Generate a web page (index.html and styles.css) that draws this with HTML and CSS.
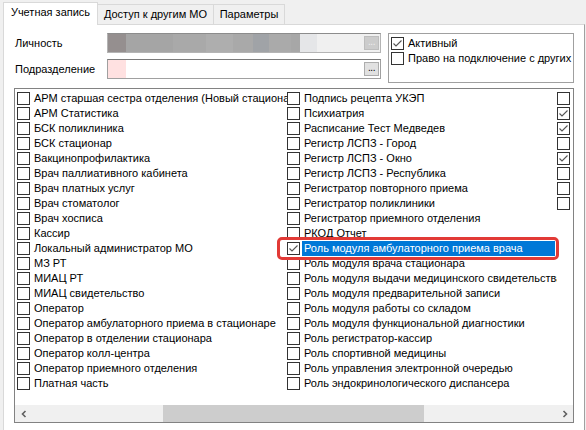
FILE: index.html
```html
<!DOCTYPE html>
<html>
<head>
<meta charset="utf-8">
<link rel="stylesheet" href="styles.css">
</head>
<body>
<div class="tabs">
  <div class="tab tab1 active">Учетная запись</div>
  <div class="tab tab2">Доступ к другим МО</div>
  <div class="tab tab3">Параметры</div>
</div>
<div class="panel">
  <div class="top">
    <div class="form">
      <div class="frow">
        <span class="lbl">Личность</span>
        <div class="field disabled">
          <span class="blk b1"></span><span class="blk b2"></span><span class="blk b3"></span><span class="blk b4"></span><span class="blk b5"></span><span class="blk b6"></span><span class="blk b7"></span><span class="blk b8"></span><span class="blk b9"></span>
          <span class="ebtn off">...</span>
        </div>
      </div>
      <div class="frow">
        <span class="lbl">Подразделение</span>
        <div class="field">
          <span class="blk pink"></span>
          <span class="ebtn">...</span>
        </div>
      </div>
    </div>
    <div class="group">
      <div class="row"><span class="cb"><svg viewBox="0 0 11 11"><polyline points="1.5,5.5 4,8 9.5,2.5"/></svg></span><span class="txt gtxt">Активный</span></div>
      <div class="row"><span class="cb"></span><span class="txt gtxt">Право на подключение с других</span></div>
    </div>
  </div>
  <div class="list">
    <div class="items">
      <div class="col">
        <div class="row"><span class="cb"></span><span class="txt">АРМ старшая сестра отделения (Новый стационар)</span></div>
        <div class="row"><span class="cb"></span><span class="txt">АРМ Статистика</span></div>
        <div class="row"><span class="cb"></span><span class="txt">БСК поликлиника</span></div>
        <div class="row"><span class="cb"></span><span class="txt">БСК стационар</span></div>
        <div class="row"><span class="cb"></span><span class="txt">Вакцинопрофилактика</span></div>
        <div class="row"><span class="cb"></span><span class="txt">Врач паллиативного кабинета</span></div>
        <div class="row"><span class="cb"></span><span class="txt">Врач платных услуг</span></div>
        <div class="row"><span class="cb"></span><span class="txt">Врач стоматолог</span></div>
        <div class="row"><span class="cb"></span><span class="txt">Врач хосписа</span></div>
        <div class="row"><span class="cb"></span><span class="txt">Кассир</span></div>
        <div class="row"><span class="cb"></span><span class="txt">Локальный администратор МО</span></div>
        <div class="row"><span class="cb"></span><span class="txt">МЗ РТ</span></div>
        <div class="row"><span class="cb"></span><span class="txt">МИАЦ РТ</span></div>
        <div class="row"><span class="cb"></span><span class="txt">МИАЦ свидетельство</span></div>
        <div class="row"><span class="cb"></span><span class="txt">Оператор</span></div>
        <div class="row"><span class="cb"></span><span class="txt">Оператор амбулаторного приема в стационаре</span></div>
        <div class="row"><span class="cb"></span><span class="txt">Оператор в отделении стационара</span></div>
        <div class="row"><span class="cb"></span><span class="txt">Оператор колл-центра</span></div>
        <div class="row"><span class="cb"></span><span class="txt">Оператор приемного отделения</span></div>
        <div class="row"><span class="cb"></span><span class="txt">Платная часть</span></div>
      </div>
      <div class="col">
        <div class="row"><span class="cb"></span><span class="txt">Подпись рецепта УКЭП</span></div>
        <div class="row"><span class="cb"></span><span class="txt">Психиатрия</span></div>
        <div class="row"><span class="cb"></span><span class="txt">Расписание Тест Медведев</span></div>
        <div class="row"><span class="cb"></span><span class="txt">Регистр ЛСПЗ - Город</span></div>
        <div class="row"><span class="cb"></span><span class="txt">Регистр ЛСПЗ - Окно</span></div>
        <div class="row"><span class="cb"></span><span class="txt">Регистр ЛСПЗ - Республика</span></div>
        <div class="row"><span class="cb"></span><span class="txt">Регистратор повторного приема</span></div>
        <div class="row"><span class="cb"></span><span class="txt">Регистратор поликлиники</span></div>
        <div class="row"><span class="cb"></span><span class="txt">Регистратор приемного отделения</span></div>
        <div class="row"><span class="cb"></span><span class="txt">РКОД Отчет</span></div>
        <div class="row sel"><span class="cb"><svg viewBox="0 0 11 11"><polyline points="1.5,5.5 4,8 9.5,2.5"/></svg></span><span class="txt">Роль модуля амбулаторного приема врача</span><span class="mark"></span></div>
        <div class="row"><span class="cb"></span><span class="txt">Роль модуля врача стационара</span></div>
        <div class="row"><span class="cb"></span><span class="txt">Роль модуля выдачи медицинского свидетельства</span></div>
        <div class="row"><span class="cb"></span><span class="txt">Роль модуля предварительной записи</span></div>
        <div class="row"><span class="cb"></span><span class="txt">Роль модуля работы со складом</span></div>
        <div class="row"><span class="cb"></span><span class="txt">Роль модуля функциональной диагностики</span></div>
        <div class="row"><span class="cb"></span><span class="txt">Роль регистратор-кассир</span></div>
        <div class="row"><span class="cb"></span><span class="txt">Роль спортивной медицины</span></div>
        <div class="row"><span class="cb"></span><span class="txt">Роль управления электронной очередью</span></div>
        <div class="row"><span class="cb"></span><span class="txt">Роль эндокринологического диспансера</span></div>
      </div>
      <div class="col col3">
        <div class="row"><span class="cb"></span></div>
        <div class="row"><span class="cb"><svg viewBox="0 0 11 11"><polyline points="1.5,5.5 4,8 9.5,2.5"/></svg></span></div>
        <div class="row"><span class="cb"><svg viewBox="0 0 11 11"><polyline points="1.5,5.5 4,8 9.5,2.5"/></svg></span></div>
        <div class="row"><span class="cb"></span></div>
        <div class="row"><span class="cb"><svg viewBox="0 0 11 11"><polyline points="1.5,5.5 4,8 9.5,2.5"/></svg></span></div>
        <div class="row"><span class="cb"></span></div>
        <div class="row"><span class="cb"></span></div>
        <div class="row"><span class="cb"></span></div>
      </div>
    </div>
    <div class="hscroll">
      <span class="sarrow"><svg viewBox="0 0 8 8"><polyline points="5.5,1 2.5,4 5.5,7"/></svg></span>
      <span class="track-before"></span>
      <span class="thumb"></span>
      <span class="track-after"></span>
      <span class="sarrow"><svg viewBox="0 0 8 8"><polyline points="2.5,1 5.5,4 2.5,7"/></svg></span>
    </div>
  </div>
</div>
</body>
</html>
```
FILE: styles.css
```css
* { box-sizing: border-box; }
html, body {
  margin: 0;
  padding: 0;
  background: #f0f0f0;
  font-family: "Liberation Sans", Arial, sans-serif;
  font-size: 11px;
  color: #000;
  overflow: hidden;
}
.tabs {
  display: flex;
  align-items: flex-end;
  height: 24px;
  padding-left: 3px;
}
.tab {
  height: 20px;
  line-height: 18px;
  border: 1px solid #d9d9d9;
  border-bottom: none;
  background: #f0f0f0;
  text-align: center;
  white-space: nowrap;
  margin-left: -1px;
}
.tab1 { width: 95px; margin-left: 0; }
.tab2 { width: 117px; }
.tab3 { width: 72px; }
.tab.active {
  height: 23px;
  line-height: 19px;
  background: #fff;
  margin-bottom: -1px;
  position: relative;
  z-index: 1;
}
.panel {
  margin-left: 3px;
  width: 582px;
  height: 420px;
  background: #fff;
  border: 1px solid #d9d9d9;
  border-right-color: #a0a0a0;
}
.top {
  display: flex;
  padding-top: 8px;
  padding-left: 11px;
}
.form { width: 366px; }
.frow {
  display: flex;
  align-items: center;
  height: 20px;
}
.frow + .frow { margin-top: 6px; }
.lbl { width: 92px; }
.field {
  width: 274px;
  height: 20px;
  border: 1px solid #a0a0a0;
  border-top-color: #7a7a7a;
  background: #fff;
  display: flex;
  align-items: center;
  padding-right: 1px;
}
.field.disabled { background: #f0f0f0; border-color: #b4b4b4; border-top-color: #8c8c8c; }
.blk { height: 18px; flex: none; }
.b1 { width: 18px; background: #958f8f; }
.b2 { width: 47px; background: #a5a5a5; }
.b3 { width: 33px; background: #a9a9a9; }
.b4 { width: 27px; background: #aeaeae; }
.b5 { width: 20px; background: #a9a9a9; }
.b6 { width: 16px; background: #a0a3a7; }
.b7 { width: 22px; background: #aaaaaa; }
.b8 { width: 9px; background: #a7a7a7; }
.b9 { width: 17px; background: #e5e6e8; }
.pink { width: 18px; background: #ffe1e1; }
.ebtn {
  margin-left: auto;
  width: 15px;
  height: 14px;
  border: 1px solid #adadad;
  background: #e1e1e1;
  font-size: 10px;
  line-height: 10px;
  text-align: center;
  letter-spacing: -0.5px;
  color: #000;
}
.ebtn.off { background: #cccccc; border-color: #bdbdbd; color: #eeeeee; }
.group {
  margin-left: 7px;
  width: 186px;
  height: 50px;
  border: 1px solid #a0a0a0;
  padding: 2px 0 0 2px;
  overflow: hidden;
}
.row {
  display: flex;
  align-items: center;
  height: 15px;
  white-space: nowrap;
}
.cb {
  flex: none;
  width: 13px;
  height: 13px;
  border: 1px solid #333;
  background: #fff;
  display: block;
}
.cb svg {
  display: block;
  width: 11px;
  height: 11px;
  fill: none;
  stroke: #555;
  stroke-width: 1.1;
}
.txt {
  flex: 1;
  min-width: 0;
  overflow: hidden;
  margin-left: 2px;
  padding-left: 2px;
  line-height: 15px;
}
.gtxt { margin-left: 1px; padding-left: 3px; }
.list {
  margin: 5px 0 0 10px;
  width: 560px;
  height: 335px;
  border: 1px solid #828282;
  display: flex;
  flex-direction: column;
}
.items {
  flex: 1;
  display: flex;
  overflow: hidden;
  padding: 2px 0 0 2px;
}
.col {
  flex: none;
  width: 270px;
}
.sel { position: relative; }
.sel .txt {
  background: #0078d7;
  color: #fff;
  margin-right: 2px;
}
.mark {
  position: absolute;
  left: -10px;
  top: -4px;
  width: 282px;
  height: 23px;
  border: 3px solid #e23a36;
  border-radius: 5px;
}
.hscroll {
  flex: none;
  height: 17px;
  display: flex;
  background: #f0f0f0;
}
.sarrow {
  flex: none;
  width: 17px;
  display: flex;
  align-items: center;
  justify-content: center;
}
.sarrow svg {
  width: 8px;
  height: 8px;
  fill: none;
  stroke: #606060;
  stroke-width: 1.6;
}
.track-before { flex: none; width: 131px; }
.thumb { flex: none; width: 261px; background: #cdcdcd; }
.track-after { flex: 1; }
```
